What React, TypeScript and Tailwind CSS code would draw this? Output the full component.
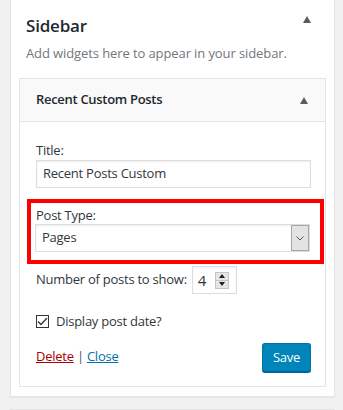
import React from "react";

function Tri({ className }: { className?: string }) {
  return (
    <svg width="8" height="7" viewBox="0 0 8 7" className={className}>
      <polygon points="4,0 8,7 0,7" fill="#555d66" />
    </svg>
  );
}

export default function App() {
  return (
    <div
      className="min-h-[410px] w-[343px] bg-[#f1f1f1] pl-[10px] overflow-hidden"
      style={{ fontFamily: '"Open Sans", "Noto Sans", sans-serif' }}
    >
      <div className="w-[325px] bg-white border-x border-b border-[#e5e5e5] shadow-[0_1px_1px_rgba(0,0,0,0.04)] pb-[9px]">
        <div className="flex items-start justify-between pl-[15px] pr-[23px] pt-[14px]">
          <h2 className="text-[17px] leading-[24px] font-semibold text-[#23282d] tracking-[-0.2px]">Sidebar</h2>
          <Tri className="mt-[2px]" />
        </div>
        <p className="pl-[15px] mt-[5px] text-[13px] leading-[20px] text-[#72777c] tracking-[-0.1px]">
          Add widgets here to appear in your sidebar.
        </p>
        <div className="mx-[8px] mt-[15px] border border-[#e5e5e5] bg-white">
          <div className="h-[43px] bg-[#f9f9f9] border-b border-[#e5e5e5] flex items-center justify-between pl-[16px] pr-[17px]">
            <span className="text-[13px] font-semibold text-[#23282d] tracking-[-0.3px]">Recent Custom Posts</span>
            <Tri />
          </div>
          <div className="pl-[16px] pr-[14px] pt-[19px] pb-[14px] text-[13px] text-[#32373c] tracking-[-0.25px]">
            <div className="leading-[18px]">Title:</div>
            <div className="mt-[1px] h-[28px] border border-[#ddd] shadow-[inset_0_1px_2px_rgba(0,0,0,0.07)] flex items-center pl-[6px] text-[#32373c]">
              Recent Posts Custom
            </div>
            <div className="mt-[11px] ml-[-9px] mr-[-13px] border-4 border-[#ff0000] pt-[3px] pb-[8px] pl-[4px] pr-[10px]">
              <div className="leading-[18px] pl-[1px]">Post Type:</div>
              <div className="h-[28px] border border-[#ddd] shadow-[inset_0_1px_2px_rgba(0,0,0,0.07)] flex items-center justify-between pl-[6px]">
                <span>Pages</span>
                <div className="h-[26px] w-[18px] bg-[#e3e3e3] border border-[#a6a6a6] flex items-center justify-center">
                  <svg width="8" height="5" viewBox="0 0 8 5">
                    <polyline points="0.5,0.5 4,4 7.5,0.5" fill="none" stroke="#555" strokeWidth="1" />
                  </svg>
                </div>
              </div>
            </div>
            <div className="mt-[2px] flex items-center">
              <span>Number of posts to show:</span>
              <div className="ml-[5px] h-[28px] w-[45px] border border-[#ddd] shadow-[inset_0_1px_2px_rgba(0,0,0,0.07)] flex items-center pl-[5px] text-[15px] text-[#32373c]">
                <span className="w-[17px]">4</span>
                <div className="w-[14px] h-[17px] border border-[#c5c5c5] bg-[#e6e6e6] flex flex-col">
                  <div className="flex-1 flex items-center justify-center border-b border-[#c5c5c5]">
                    <svg width="6" height="4" viewBox="0 0 6 4"><polygon points="3,0 6,4 0,4" fill="#222" /></svg>
                  </div>
                  <div className="flex-1 flex items-center justify-center">
                    <svg width="6" height="4" viewBox="0 0 6 4"><polygon points="0,0 6,0 3,4" fill="#222" /></svg>
                  </div>
                </div>
              </div>
            </div>
            <div className="mt-[19px] flex items-center">
              <div className="w-[13px] h-[13px] border border-[#333] flex items-center justify-center">
                <svg width="11" height="9" viewBox="0 0 11 9">
                  <polyline points="1,4.5 4,7.5 10,1" fill="none" stroke="#333" strokeWidth="1.3" />
                </svg>
              </div>
              <span className="ml-[7px] leading-[16px]">Display post date?</span>
            </div>
            <div className="mt-[14px] flex items-start justify-between">
              <div className="mt-[4px] leading-[18px]">
                <a className="text-[#a00] underline">Delete</a>
                <span className="text-[#555]"> | </span>
                <a className="text-[#0073aa] underline">Close</a>
              </div>
              <button className="h-[29px] w-[49px] rounded-[3px] bg-[#0085ba] border border-[#0073aa] border-b-[#006799] text-white text-[13px] shadow-[0_1px_0_#006799]">
                Save
              </button>
            </div>
          </div>
        </div>
      </div>
      <div className="mt-[12px] w-[325px] h-[20px] bg-white border border-[#e5e5e5]" />
    </div>
  );
}
